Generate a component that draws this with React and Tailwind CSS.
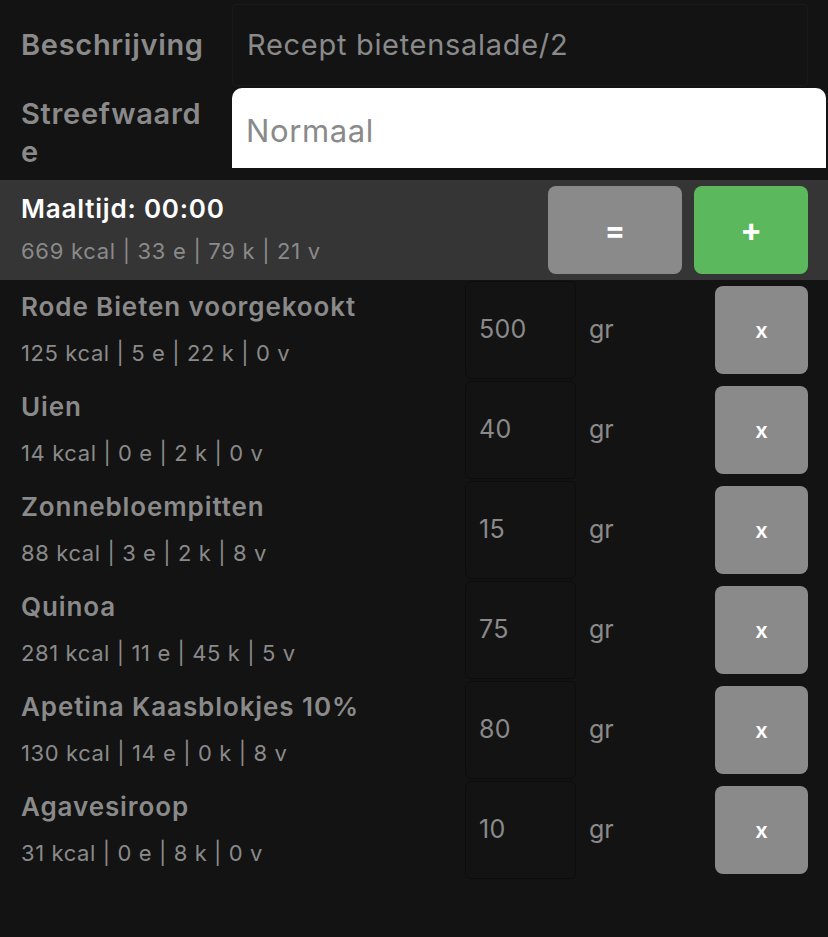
import React from "react";

const items = [
  { name: "Rode Bieten voorgekookt", info: "125 kcal | 5 e | 22 k | 0 v", qty: "500" },
  { name: "Uien", info: "14 kcal | 0 e | 2 k | 0 v", qty: "40" },
  { name: "Zonnebloempitten", info: "88 kcal | 3 e | 2 k | 8 v", qty: "15" },
  { name: "Quinoa", info: "281 kcal | 11 e | 45 k | 5 v", qty: "75" },
  { name: "Apetina Kaasblokjes 10%", info: "130 kcal | 14 e | 0 k | 8 v", qty: "80" },
  { name: "Agavesiroop", info: "31 kcal | 0 e | 8 k | 0 v", qty: "10" },
];

function ItemRow({ item }) {
  return (
    <div className="flex h-[100px] items-center">
      <div className="flex-1 pl-[21px]">
        <div className="text-[26px] font-semibold leading-[30px] tracking-[0.9px] text-[#8a8a8a]">{item.name}</div>
        <div className="mt-[16px] text-[22px] leading-[30px] tracking-[0.6px] text-[#8a8a8a]">{item.info}</div>
      </div>
      <div className="flex h-[98px] w-[111px] items-center rounded-[6px] border border-[#0d0d0d] pl-[13px] text-[25px] tracking-[0.3px] text-[#8a8a8a]">
        {item.qty}
      </div>
      <div className="w-[139px] pl-[13px] text-[25px] text-[#8a8a8a]">gr</div>
      <button className="mr-[20px] flex h-[88px] w-[93px] items-center justify-center rounded-[8px] bg-[#8a8a8a] text-[22px] font-semibold text-white">
        x
      </button>
    </div>
  );
}

export default function App() {
  return (
    <div className="min-h-[937px] w-[828px] bg-[#131313] font-['Inter',sans-serif]">
      <div className="flex h-[88px] items-center pt-[2px]">
        <div className="w-[232px] pl-[21px] text-[29px] font-semibold tracking-[0.7px] text-[#8a8a8a]">Beschrijving</div>
        <div className="flex h-[82px] w-[576px] items-center rounded-[4px] border border-[#1a1a1a] pl-[14px] text-[29px] tracking-[0.7px] text-[#8a8a8a]">
          Recept bietensalade/2
        </div>
      </div>
      <div className="flex h-[92px]">
        <div className="w-[232px] pl-[21px] pt-[7px] text-[29px] font-semibold leading-[38px] tracking-[0.7px] text-[#8a8a8a]">
          Streefwaard
          <br />e
        </div>
        <div className="flex h-[80px] w-[594px] items-center rounded-t-[10px] bg-white pl-[14px] pt-[7px] text-[31px] tracking-[0.6px] text-[#8a8a8a]">
          Normaal
        </div>
      </div>
      <div className="flex h-[100px] items-center bg-[#353535]">
        <div className="flex-1 pl-[21px]">
          <div className="text-[26px] font-semibold leading-[30px] tracking-[0.8px] text-white">Maaltijd: 00:00</div>
          <div className="mt-[12px] text-[22px] leading-[30px] tracking-[0.7px] text-[#8a8a8a]">669 kcal | 33 e | 79 k | 21 v</div>
        </div>
        <button className="flex h-[88px] w-[134px] items-center justify-center rounded-[8px] bg-[#8a8a8a] text-[30px] font-bold text-white">
          =
        </button>
        <button className="ml-[12px] mr-[20px] flex h-[88px] w-[114px] items-center justify-center rounded-[8px] bg-[#5cb85c] text-[32px] font-bold text-white">
          +
        </button>
      </div>
      {items.map((it) => (
        <ItemRow key={it.name} item={it} />
      ))}
    </div>
  );
}
